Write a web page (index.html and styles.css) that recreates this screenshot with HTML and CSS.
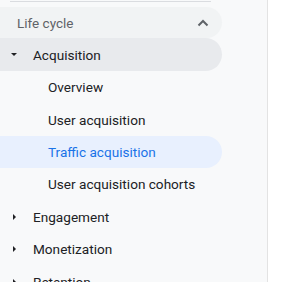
FILE: index.html
```
<!DOCTYPE html>
<html lang="en">
<head>
    <meta charset="UTF-8">
    <title>Reports navigation</title>
    <link rel="stylesheet" href="styles.css">
</head>
<body>
    <nav class="sidebar">
        <div class="divider"></div>

        <div class="collection">
            <span>Life cycle</span>
            <svg class="chevron" width="12" height="8" viewBox="0 0 12 8">
                <path d="M1.5 6.5 L6 2 L10.5 6.5" fill="none" stroke="#5f6368" stroke-width="2"/>
            </svg>
        </div>

        <div class="topic open">
            <span class="caret down"></span>
            <span>Acquisition</span>
        </div>
        <div class="report">Overview</div>
        <div class="report">User acquisition</div>
        <div class="report active">Traffic acquisition</div>
        <div class="report">User acquisition cohorts</div>

        <div class="topic">
            <span class="caret right"></span>
            <span>Engagement</span>
        </div>
        <div class="topic">
            <span class="caret right"></span>
            <span>Monetization</span>
        </div>
        <div class="topic">
            <span class="caret right"></span>
            <span>Retention</span>
        </div>
    </nav>
</body>
</html>
```

FILE: styles.css
```
html, body {
    margin: 0;
    height: 100%;
    background: #ffffff;
    overflow: hidden;
}

body {
    font-family: Roboto, "Liberation Sans", sans-serif;
}

.sidebar {
    width: 267px;
    height: 100%;
    background: #f8f9fa;
    border-right: 1px solid #e3e3e3;
    padding-top: 1px;
    box-sizing: content-box;
}

.divider {
    height: 1px;
    background: #dadce0;
    margin: 0 56px 0 10px;
}

.collection {
    display: flex;
    align-items: center;
    justify-content: space-between;
    width: 222px;
    height: 31px;
    margin-top: 5px;
    padding: 0 13px 0 17px;
    box-sizing: border-box;
    background: #f1f3f4;
    border-radius: 0 16px 16px 0;
    color: #5f6368;
    font-size: 13.5px;
}

.topic, .report {
    display: flex;
    align-items: center;
    width: 222px;
    height: 32.4px;
    box-sizing: border-box;
    font-size: 13.6px;
    color: #202124;
    border-radius: 0 17px 17px 0;
}

.topic {
    padding-left: 11px;
}

.topic.open {
    background: #e8eaed;
    height: 33px;
}

.report {
    padding-left: 48px;
}

.report.active {
    background: #e8f0fe;
    color: #1a73e8;
}

.caret {
    display: inline-block;
    width: 22px;
    height: 6px;
    position: relative;
}

.caret::before {
    content: "";
    position: absolute;
    border-style: solid;
    border-color: transparent;
}

.caret.down::before {
    left: 0;
    top: 1px;
    border-width: 3px 3px 0 3px;
    border-top-color: #202124;
}

.caret.right::before {
    left: 2px;
    top: 0;
    border-width: 3px 0 3px 3px;
    border-left-color: #202124;
}
```
